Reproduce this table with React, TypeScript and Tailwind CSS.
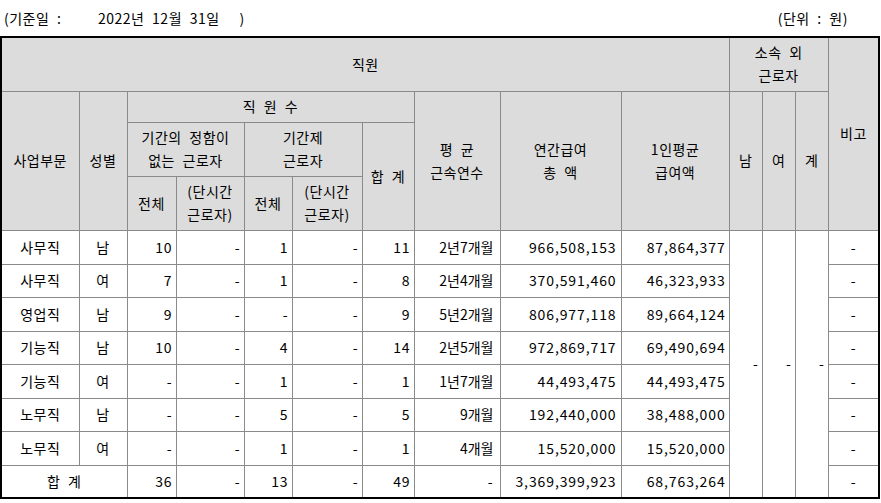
import React from "react";

type Row = {
  part: string;
  sex: string;
  perm: string;
  permShort: string;
  temp: string;
  tempShort: string;
  total: string;
  years: string;
  pay: string;
  avg: string;
};

const rows: Row[] = [
  { part: "사무직", sex: "남", perm: "10", permShort: "-", temp: "1", tempShort: "-", total: "11", years: "2년7개월", pay: "966,508,153", avg: "87,864,377" },
  { part: "사무직", sex: "여", perm: "7", permShort: "-", temp: "1", tempShort: "-", total: "8", years: "2년4개월", pay: "370,591,460", avg: "46,323,933" },
  { part: "영업직", sex: "남", perm: "9", permShort: "-", temp: "-", tempShort: "-", total: "9", years: "5년2개월", pay: "806,977,118", avg: "89,664,124" },
  { part: "기능직", sex: "남", perm: "10", permShort: "-", temp: "4", tempShort: "-", total: "14", years: "2년5개월", pay: "972,869,717", avg: "69,490,694" },
  { part: "기능직", sex: "여", perm: "-", permShort: "-", temp: "1", tempShort: "-", total: "1", years: "1년7개월", pay: "44,493,475", avg: "44,493,475" },
  { part: "노무직", sex: "남", perm: "-", permShort: "-", temp: "5", tempShort: "-", total: "5", years: "9개월", pay: "192,440,000", avg: "38,488,000" },
  { part: "노무직", sex: "여", perm: "-", permShort: "-", temp: "1", tempShort: "-", total: "1", years: "4개월", pay: "15,520,000", avg: "15,520,000" },
];

const heights = ["h-[34px]", "h-[33px]", "h-[34px]", "h-[33px]", "h-[34px]", "h-[33px]", "h-[34px]"];

const th = "border border-[#8a8a8a] bg-[#dcdcdc] font-normal text-center align-middle leading-[23px] p-0 tracking-[0.5px] [word-spacing:4px]";
const td = "border border-[#8a8a8a] p-0 align-middle whitespace-nowrap";
const num = `${td} text-right pr-[3px] tracking-[0.9px]`;
const mid = `${td} text-center tracking-[0.5px] [word-spacing:4px]`;

export default function App() {
  return (
    <div
      className="w-[881px] h-[503px] bg-white text-black text-[14px] overflow-hidden"
      style={{ fontFamily: '"Noto Sans CJK KR", "Noto Sans", sans-serif' }}
    >
      {/* 기준일 / 단위 */}
      <div className="flex items-center h-[36px] pl-[4px] pr-[33px] whitespace-pre tracking-[0.5px] [word-spacing:4px]">
        <span className="w-[94px]">(기준일 :</span>
        <span>2022년 12월 31일</span>
        <span className="ml-[20px]">)</span>
        <span className="ml-auto">(단위 : 원)</span>
      </div>

      <table className="table-fixed border-collapse border-2 border-black w-[878px]">
        <colgroup>
          <col className="w-[78px]" />
          <col className="w-[48px]" />
          <col className="w-[49px]" />
          <col className="w-[68px]" />
          <col className="w-[48px]" />
          <col className="w-[70px]" />
          <col className="w-[52px]" />
          <col className="w-[86px]" />
          <col className="w-[121px]" />
          <col className="w-[108px]" />
          <col className="w-[33px]" />
          <col className="w-[33px]" />
          <col className="w-[33px]" />
          <col className="w-[51px]" />
        </colgroup>
        <thead>
          <tr className="h-[54px]">
            <th colSpan={10} className={th}>직원</th>
            <th colSpan={3} className={th}>
              소속 외
              <br />
              근로자
            </th>
            <th rowSpan={4} className={th}>비고</th>
          </tr>
          <tr className="h-[31px]">
            <th rowSpan={3} className={th}>사업부문</th>
            <th rowSpan={3} className={th}>성별</th>
            <th colSpan={5} className={th}>직 원 수</th>
            <th rowSpan={3} className={th}>
              평 균
              <br />
              근속연수
            </th>
            <th rowSpan={3} className={th}>
              연간급여
              <br />총 액
            </th>
            <th rowSpan={3} className={th}>
              1인평균
              <br />
              급여액
            </th>
            <th rowSpan={3} className={th}>남</th>
            <th rowSpan={3} className={th}>여</th>
            <th rowSpan={3} className={th}>계</th>
          </tr>
          <tr className="h-[54px]">
            <th colSpan={2} className={th}>
              기간의 정함이
              <br />
              없는 근로자
            </th>
            <th colSpan={2} className={th}>
              기간제
              <br />
              근로자
            </th>
            <th rowSpan={2} className={th}>합 계</th>
          </tr>
          <tr className="h-[54px]">
            <th className={th}>전체</th>
            <th className={th}>
              (단시간
              <br />
              근로자)
            </th>
            <th className={th}>전체</th>
            <th className={th}>
              (단시간
              <br />
              근로자)
            </th>
          </tr>
        </thead>
        <tbody>
          {rows.map((r, i) => (
            <tr key={i} className={heights[i]}>
              <td className={mid}>{r.part}</td>
              <td className={mid}>{r.sex}</td>
              <td className={num}>{r.perm}</td>
              <td className={num}>{r.permShort}</td>
              <td className={num}>{r.temp}</td>
              <td className={num}>{r.tempShort}</td>
              <td className={num}>{r.total}</td>
              <td className={`${td} text-right pr-[6px]`}>{r.years}</td>
              <td className={`${num} pr-[4px]`}>{r.pay}</td>
              <td className={num}>{r.avg}</td>
              {i === 0 && (
                <>
                  <td rowSpan={8} className={num}>-</td>
                  <td rowSpan={8} className={num}>-</td>
                  <td rowSpan={8} className={num}>-</td>
                </>
              )}
              <td className={mid}>-</td>
            </tr>
          ))}
          <tr className="h-[33px]">
            <td colSpan={2} className={mid}>합 계</td>
            <td className={num}>36</td>
            <td className={num}>-</td>
            <td className={num}>13</td>
            <td className={num}>-</td>
            <td className={num}>49</td>
            <td className={`${num} pr-[6px]`}>-</td>
            <td className={`${num} pr-[4px]`}>3,369,399,923</td>
            <td className={num}>68,763,264</td>
            <td className={mid}>-</td>
          </tr>
        </tbody>
      </table>
    </div>
  );
}
